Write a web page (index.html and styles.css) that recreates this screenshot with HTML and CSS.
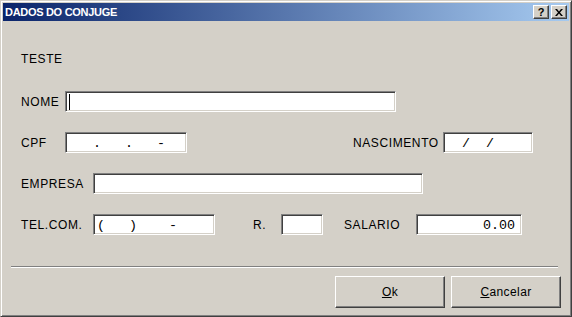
FILE: index.html
```html
<!DOCTYPE html>
<html lang="pt-br">

<head>
  <meta charset="UTF-8">
  <title>Dados do Conjuge</title>
  <link rel="stylesheet" href="styles.css">
</head>

<body>
  <div class="janela">
    <div class="titulo">
      <span class="titulo-texto">DADOS DO CONJUGE</span>
      <div class="titulo-botoes">
        <div class="tbtn ajuda">?</div>
        <div class="tbtn">
          <svg width="8" height="7" viewBox="0 0 8 7">
            <path d="M0 0h2l2 2.5l2-2.5h2l-3 3.5l3 3.5h-2l-2-2.5l-2 2.5h-2l3-3.5z" fill="#000"/>
          </svg>
        </div>
      </div>
    </div>

    <div class="corpo">
      <div class="linha teste">TESTE</div>

      <div class="linha">
        <label class="rot w44">NOME</label>
        <div class="edit w331"><span class="cursor"></span></div>
      </div>

      <div class="linha">
        <label class="rot w44">CPF</label>
        <div class="edit w122 mask">   .   .   -</div>
        <label class="rot nasc">NASCIMENTO</label>
        <div class="edit w90 mask p1">  /  /</div>
      </div>

      <div class="linha">
        <label class="rot w72">EMPRESA</label>
        <div class="edit w330"></div>
      </div>

      <div class="linha">
        <label class="rot w72">TEL.COM.</label>
        <div class="edit w122 mask">(   )    -</div>
        <label class="rot ramal">R.</label>
        <div class="edit w42"></div>
        <label class="rot salario">SALARIO</label>
        <div class="edit w106 mask valor">0.00</div>
      </div>

      <div class="separador"></div>

      <div class="botoes">
        <button class="botao"><u>O</u>k</button>
        <button class="botao"><u>C</u>ancelar</button>
      </div>
    </div>
  </div>
</body>

</html>
```

FILE: styles.css
```css
body {
  margin: 0px;
  background-color: #D4D0C8;
}

.janela {
  width: 572px;
  height: 317px;
  box-sizing: border-box;
  background-color: #D4D0C8;
  border: 1px solid;
  border-color: #D4D0C8 #404040 #404040 #D4D0C8;
  box-shadow: inset 1px 1px #FFFFFF, inset -1px -1px #808080;
  padding: 2px;
  font-family: "Liberation Sans", Arial, sans-serif;
  font-size: 12px;
  color: #000000;
}

/* barra de titulo */
.titulo {
  height: 18px;
  display: flex;
  align-items: center;
  background: linear-gradient(to right, #0A246A, #A6CAF0);
  padding-left: 2px;
}

.titulo-texto {
  color: #FFFFFF;
  font-weight: bold;
  font-size: 11px;
  letter-spacing: -0.3px;
  flex: 1;
}

.titulo-botoes {
  display: flex;
  gap: 2px;
  margin-right: 2px;
}

.tbtn {
  width: 16px;
  height: 14px;
  box-sizing: border-box;
  background-color: #D4D0C8;
  border: 1px solid;
  border-color: #FFFFFF #404040 #404040 #FFFFFF;
  box-shadow: inset -1px -1px #808080;
  display: flex;
  align-items: center;
  justify-content: center;
}

.ajuda {
  font-weight: bold;
  font-size: 11px;
  line-height: 11px;
}

/* conteudo */
.corpo {
  padding-left: 18px;
}

.linha {
  display: flex;
  align-items: center;
  height: 21px;
  margin-bottom: 20px;
}

.teste {
  margin-top: 27px;
  margin-bottom: 22px;
  letter-spacing: 0.6px;
}

.rot {
  letter-spacing: 0.6px;
  flex-shrink: 0;
}

.w44 { width: 44px; }
.w72 { width: 72px; }

.nasc {
  margin-left: 166px;
  width: 90px;
}

.ramal {
  margin-left: 38px;
  width: 28px;
}

.salario {
  margin-left: 21px;
  width: 72px;
}

.edit {
  height: 21px;
  box-sizing: border-box;
  background-color: #FFFFFF;
  border: 1px solid;
  border-color: #808080 #FFFFFF #FFFFFF #808080;
  box-shadow: inset 1px 1px #404040, inset -1px -1px #D4D0C8;
  padding: 1px 2px 0 3px;
  display: flex;
  align-items: center;
  flex-shrink: 0;
}

.w331 { width: 331px; }
.w330 { width: 330px; }
.w122 { width: 122px; }
.w90 { width: 90px; }
.w42 { width: 42px; }
.w106 { width: 106px; }

.mask {
  font-family: "Liberation Mono", "Courier New", monospace;
  font-size: 13.33px;
  white-space: pre;
}

.p1 {
  padding-left: 2px;
}

.valor {
  justify-content: flex-end;
  padding-right: 6px;
}

.cursor {
  width: 1px;
  height: 16px;
  background-color: #000000;
}

.separador {
  margin: 31px 11px 0 -10px;
  border-top: 1px solid #808080;
  border-bottom: 1px solid #FFFFFF;
  height: 0;
}

.botoes {
  display: flex;
  justify-content: flex-end;
  gap: 6px;
  margin-top: 8px;
  margin-right: 8px;
}

.botao {
  width: 110px;
  height: 32px;
  box-sizing: border-box;
  background-color: #D4D0C8;
  border: 1px solid;
  border-color: #FFFFFF #404040 #404040 #FFFFFF;
  box-shadow: inset -1px -1px #808080;
  font-family: "Liberation Sans", Arial, sans-serif;
  font-size: 12px;
  letter-spacing: 0.4px;
  color: #000000;
  padding: 0;
}
```
